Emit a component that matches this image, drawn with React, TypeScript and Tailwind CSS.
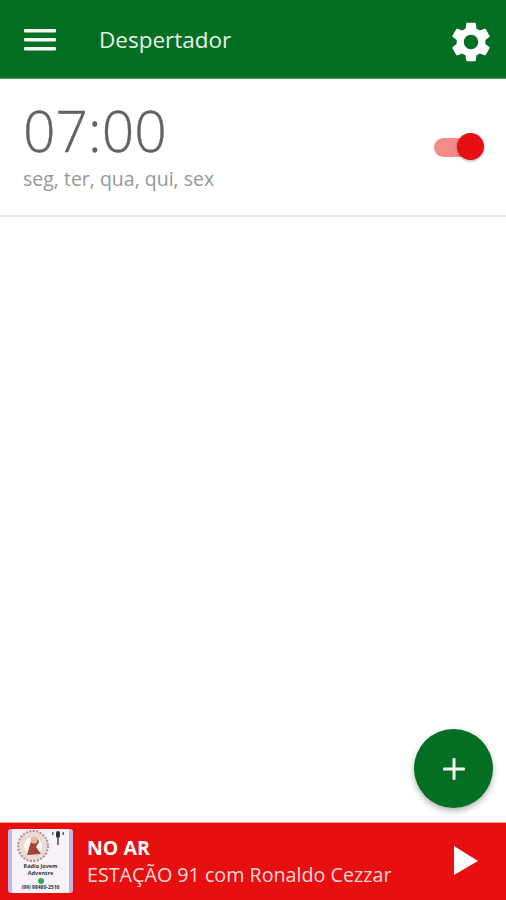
import React from "react";

export default function App() {
  return (
    <div className="w-[506px] h-[900px] flex flex-col bg-white overflow-hidden relative font-['Open_Sans',sans-serif]">
      <header className="h-[79px] shrink-0 bg-[#046f22] border-b border-[#4f9a66] flex items-center">
        <svg width="32" height="22" viewBox="0 0 32 22" className="ml-[24px] shrink-0 mt-[1px]">
          <rect x="0" y="0" width="32" height="3.5" rx="1" fill="#f4f8f5" />
          <rect x="0" y="9" width="32" height="3.5" rx="1" fill="#f4f8f5" />
          <rect x="0" y="18" width="32" height="3.5" rx="1" fill="#f4f8f5" />
        </svg>
        <span className="ml-[43px] text-[22.5px] text-[#e6f1e9] leading-none mt-[3px]">Despertador</span>
        <svg width="48" height="48" viewBox="0 0 24 24" className="ml-auto mr-[11px] mt-[5px]" fill="#ffffff">
          <path d="M19.14 12.94c.04-.3.06-.61.06-.94 0-.32-.02-.64-.07-.94l2.03-1.58a.49.49 0 0 0 .12-.61l-1.92-3.32a.488.488 0 0 0-.59-.22l-2.39.96c-.5-.38-1.03-.7-1.62-.94l-.36-2.54a.484.484 0 0 0-.48-.41h-3.84c-.24 0-.43.17-.47.41l-.36 2.54c-.59.24-1.13.57-1.62.94l-2.39-.96c-.22-.08-.47 0-.59.22L2.74 8.87c-.12.21-.08.47.12.61l2.03 1.58c-.05.3-.09.63-.09.94s.02.64.07.94l-2.03 1.58a.49.49 0 0 0-.12.61l1.92 3.32c.12.22.37.29.59.22l2.39-.96c.5.38 1.03.7 1.62.94l.36 2.54c.05.24.24.41.48.41h3.84c.24 0 .44-.17.47-.41l.36-2.54c.59-.24 1.13-.56 1.62-.94l2.39.96c.22.08.47 0 .59-.22l1.92-3.32c.12-.22.07-.47-.12-.61l-2.01-1.58zM12 15.6c-1.98 0-3.6-1.62-3.6-3.6s1.62-3.6 3.6-3.6 3.6 1.62 3.6 3.6-1.62 3.6-3.6 3.6z" />
        </svg>
      </header>

      <main className="flex-1 min-h-0">
        <div className="h-[138px] border-b-2 border-[#e6e6e6] flex items-center justify-between pl-[23px] pr-[22px]">
          <div className="flex flex-col">
            <span className="text-[57px] font-light leading-[62px] text-[#636363] mt-[-4px] [-webkit-text-stroke:0.4px_#636363]">07:00</span>
            <span className="text-[19.5px] leading-[24px] text-[#979797] mt-[6px]">seg, ter, qua, qui, sex</span>
          </div>
          <div className="relative w-[50px] h-[28px] flex items-center">
            <div className="w-[44px] h-[19px] rounded-full bg-[#f48a8a]" />
            <div className="absolute right-0 top-0 w-[27px] h-[27px] rounded-full bg-[#e70f14] shadow-[0_1px_3px_rgba(0,0,0,0.35)]" />
          </div>
        </div>
      </main>

      <button className="absolute left-[414px] top-[729px] w-[79px] h-[79px] rounded-full bg-[#046f22] shadow-[0_3px_6px_rgba(0,0,0,0.3)] flex items-center justify-center">
        <svg width="22" height="22" viewBox="0 0 22 22">
          <rect x="0" y="9.5" width="22" height="3" rx="1" fill="#f0f6f1" />
          <rect x="9.5" y="0" width="3" height="22" rx="1" fill="#f0f6f1" />
        </svg>
      </button>

      <footer className="h-[78px] shrink-0 bg-[#e70f10] border-t border-[#f4a0a0] flex items-center">
        <div className="ml-[8px] w-[65px] h-[64px] rounded-[3px] bg-[#f6f3f8] border-x-[4px] border-[#c3b6e0] flex flex-col items-center overflow-hidden mt-[-1px]">
          <div className="flex items-start mt-[1px] pl-[5px] w-full">
            <svg width="34" height="32" viewBox="0 0 34 32">
              <circle cx="16" cy="16" r="15" fill="#e8dcd8" stroke="#b98a86" strokeWidth="2" strokeDasharray="2 1.5" />
              <circle cx="16" cy="16" r="9" fill="#fbf6f2" />
              <path d="M10 25 L15 8 Q21 7 22 12 L19 17 L24 24 Z" fill="#a5403a" />
              <circle cx="17" cy="10" r="3.5" fill="#e8b9a0" />
            </svg>
            <svg width="12" height="16" viewBox="0 0 12 16" className="ml-[1px]">
              <rect x="4" y="1" width="4" height="7" rx="2" fill="#333" />
              <rect x="5.3" y="8" width="1.4" height="7" fill="#444" />
              <rect x="0" y="2" width="1.5" height="3" fill="#666" />
              <rect x="10.5" y="2" width="1.5" height="3" fill="#666" />
            </svg>
          </div>
          <span className="text-[5.5px] font-bold leading-[7px] text-[#333] mt-[1px] whitespace-nowrap">Rádio Jovem</span>
          <span className="text-[5.5px] font-bold leading-[7px] text-[#333] whitespace-nowrap">Adventre</span>
          <span className="w-[6px] h-[6px] rounded-full bg-[#35a854] mt-[1px]" />
          <span className="text-[5px] font-bold leading-[7px] text-[#333] whitespace-nowrap">(99) 98480-2516</span>
        </div>
        <div className="ml-[14px] flex flex-col text-white">
          <span className="text-[19.5px] font-bold leading-[26px] mt-[-1px]">NO AR</span>
          <span className="text-[19.7px] leading-[26px] text-[#fbdada] whitespace-nowrap mt-[1px]">ESTAÇÃO 91 com Ronaldo Cezzar</span>
        </div>
        <svg width="24" height="30" viewBox="0 0 24 30" className="ml-auto mr-[28px] mt-[-1px]">
          <path d="M0 0 L24 15 L0 29 Z" fill="#ffffff" />
        </svg>
      </footer>
    </div>
  );
}
